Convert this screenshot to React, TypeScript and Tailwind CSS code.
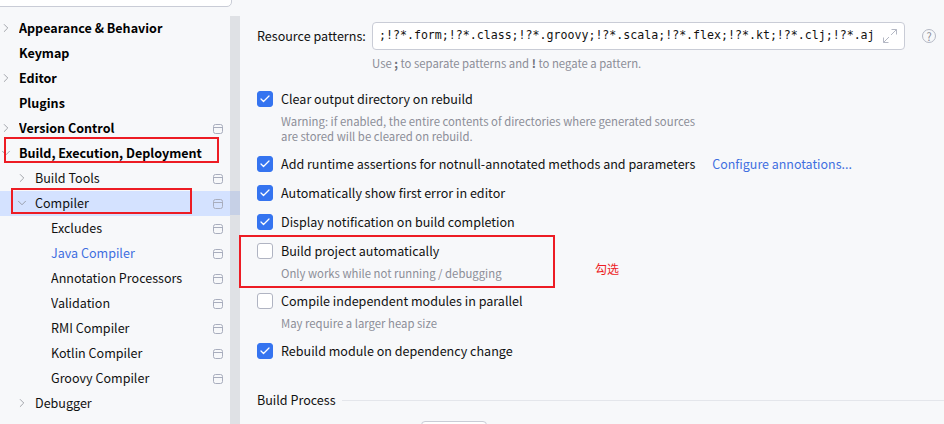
import type React from 'react';
import { ChevronRight, ChevronDown, Check } from 'lucide-react';

const FONT = "font-['Noto_Sans_CJK_SC','Noto_Sans',sans-serif]";

interface TreeRow {
  label: string;
  level: 0 | 1 | 2;
  arrow?: 'right' | 'down';
  project?: boolean;
  bold?: boolean;
  selected?: boolean;
  link?: boolean;
  clipped?: boolean;
}

const rows: TreeRow[] = [
  { label: 'Appearance & Behavior', level: 0, arrow: 'right', bold: true },
  { label: 'Keymap', level: 0, bold: true },
  { label: 'Editor', level: 0, arrow: 'right', bold: true },
  { label: 'Plugins', level: 0, bold: true },
  { label: 'Version Control', level: 0, arrow: 'right', bold: true, project: true },
  { label: 'Build, Execution, Deployment', level: 0, arrow: 'down', bold: true },
  { label: 'Build Tools', level: 1, arrow: 'right', project: true },
  { label: 'Compiler', level: 1, arrow: 'down', project: true, selected: true },
  { label: 'Excludes', level: 2, project: true },
  { label: 'Java Compiler', level: 2, project: true, link: true },
  { label: 'Annotation Processors', level: 2, project: true },
  { label: 'Validation', level: 2, project: true },
  { label: 'RMI Compiler', level: 2, project: true },
  { label: 'Kotlin Compiler', level: 2, project: true },
  { label: 'Groovy Compiler', level: 2, project: true },
  { label: 'Debugger', level: 1, arrow: 'right' },
  { label: 'Remote Jar Repositories', level: 1, clipped: true },
];

const ProjectIcon = () => (
  <svg width="10" height="10" viewBox="0 0 10 10" fill="none" stroke="#a8adbd" className="shrink-0">
    <rect x="0.5" y="0.5" width="9" height="9" rx="2" />
    <path d="M0.5 3.5H9.5" />
  </svg>
);

const Tree = ({ row }: { row: TreeRow }) => {
  const indent = row.level === 0 ? 'pl-[19px]' : row.level === 1 ? 'pl-[35px]' : 'pl-[51px]';
  const arrowPos = row.level === 0 ? '-left-px' : 'left-[15px]';
  const color = row.bold ? 'font-bold text-black' : row.link ? 'text-[#3f6fe0]' : 'text-[#111]';
  return (
    <div className={`relative flex h-[25px] items-center pr-[7px] ${indent} ${row.selected ? 'bg-[#d4e2ff]' : ''}`}>
      {row.arrow === 'right' && (
        <ChevronRight size={14} strokeWidth={1.2} className={`absolute top-[5px] text-[#7f8289] ${arrowPos}`} />
      )}
      {row.arrow === 'down' && (
        <ChevronDown size={14} strokeWidth={1.2} className={`absolute top-[5px] text-[#7f8289] ${arrowPos}`} />
      )}
      <span className={`flex-1 truncate text-[12.55px] ${color} ${row.clipped ? 'mt-[5px]' : ''}`}>{row.label}</span>
      {row.project && <ProjectIcon />}
    </div>
  );
};

const CheckRow = ({ label, checked, children }: { label: string; checked?: boolean; children?: React.ReactNode }) => (
  <div className="flex h-[16px] items-center">
    <span
      className={`mr-2 flex h-4 w-4 shrink-0 items-center justify-center rounded-[3px] border ${
        checked ? 'border-[#3574f0] bg-[#3574f0]' : 'border-[#b0b4c2] bg-white'
      }`}
    >
      {checked && <Check size={12} strokeWidth={2.5} className="text-white" />}
    </span>
    <span className="text-[12.55px] whitespace-nowrap text-[#111]">{label}</span>
    {children}
  </div>
);

const Hint = ({ children }: { children: React.ReactNode }) => (
  <div className="ml-6 text-[11.35px] leading-[15px] text-[#8c8e98]">{children}</div>
);

export default function App() {
  return (
    <div className={`relative flex h-[424px] w-[944px] overflow-hidden bg-[#f7f8fa] ${FONT}`}>
      {/* Left settings tree */}
      <div className="relative w-[240px] shrink-0">
        <div className="absolute -left-2 -top-2 h-[15px] w-[240px] rounded-[5px] border border-[#c9ccd6] bg-white" />
        <div className="flex">
          <div className="w-[230px] pt-4">
            {rows.map((r) => (
              <Tree key={r.label} row={r} />
            ))}
          </div>
          <div className="mt-4 h-[408px] w-[10px] bg-[#dfe1e5]">
            <div className="mt-[175px] h-[24px] bg-[#c6d0e6]" />
          </div>
        </div>
      </div>

      {/* Right compiler options */}
      <div className="flex-1 pl-[17px] pt-[22px]">
        <div className="flex items-center">
          <span className="w-[115px] shrink-0 text-[12.55px] whitespace-nowrap text-[#111]">Resource patterns:</span>
          <div className="flex h-7 w-[533px] items-center rounded-[4px] border border-[#c9ccd6] bg-white pl-[6px] pr-[7px]">
            <span className="flex-1 font-['DejaVu_Sans_Mono',monospace] text-[11.6px] whitespace-nowrap text-[#111]">
              ;!?*.form;!?*.class;!?*.groovy;!?*.scala;!?*.flex;!?*.kt;!?*.clj;!?*.aj
            </span>
            <svg width="14" height="14" viewBox="0 0 14 14" fill="none" stroke="#b4b8c4" className="shrink-0">
              <path d="M8 6l5.5-5.5M8.5 0.5h5v5M6 8l-5.5 5.5M0.5 8.5v5h5" />
            </svg>
          </div>
          <span className="ml-[17px] flex h-[14px] w-[14px] items-center justify-center rounded-full border border-[#b4b8c4] text-[11px] leading-none text-[#8c8e98]">
            ?
          </span>
        </div>
        <div className="ml-[115px] mt-[6px] text-[11.35px] leading-[15px] text-[#8c8e98]">
          Use <b className="text-[#6c6e78]">;</b> to separate patterns and <b className="text-[#6c6e78]">!</b> to negate a pattern.
        </div>

        <div className="mt-[20px]">
          <CheckRow label="Clear output directory on rebuild" checked />
          <div className="mt-[7px]">
            <Hint>
              Warning: if enabled, the entire contents of directories where generated sources
              <br />
              are stored will be cleared on rebuild.
            </Hint>
          </div>
        </div>
        <div className="mt-[12px]">
          <CheckRow label="Add runtime assertions for notnull-annotated methods and parameters" checked>
            <span className="ml-[17px] text-[12.45px] whitespace-nowrap text-[#3f6fe0]">Configure annotations...</span>
          </CheckRow>
        </div>
        <div className="mt-[13px]">
          <CheckRow label="Automatically show first error in editor" checked />
        </div>
        <div className="mt-[13px]">
          <CheckRow label="Display notification on build completion" checked />
        </div>
        <div className="mt-[13px]">
          <CheckRow label="Build project automatically" />
          <div className="mt-[7px]">
            <Hint>Only works while not running / debugging</Hint>
          </div>
        </div>
        <div className="mt-[12px]">
          <CheckRow label="Compile independent modules in parallel" />
          <div className="mt-[7px]">
            <Hint>May require a larger heap size</Hint>
          </div>
        </div>
        <div className="mt-[12px]">
          <CheckRow label="Rebuild module on dependency change" checked />
        </div>
        <div className="mt-[32px] flex items-center">
          <span className="text-[12.55px] whitespace-nowrap text-[#111]">Build Process</span>
          <div className="ml-[6px] h-px flex-1 bg-[#e4e6eb]" />
        </div>
        <div className="ml-[164px] mt-[11px] h-5 w-[66px] rounded-[4px] border border-[#c9ccd6] bg-white" />
      </div>

      {/* Red annotation overlays */}
      <div className="absolute left-[4px] top-[137px] h-[26px] w-[215px] border-2 border-[#ed1c24]" />
      <div className="absolute left-[11px] top-[188px] h-[26px] w-[181px] border-2 border-[#ed1c24]" />
      <div className="absolute left-[239px] top-[235px] h-[53px] w-[316px] border-2 border-[#ed1c24]" />
      <span className="absolute left-[595px] top-[261px] text-[12px] leading-4 text-[#ed1c24]">勾选</span>
    </div>
  );
}
